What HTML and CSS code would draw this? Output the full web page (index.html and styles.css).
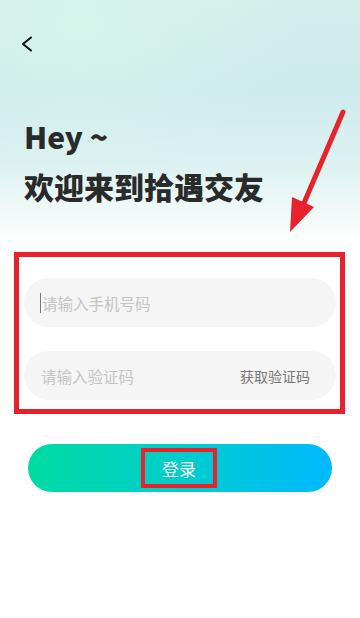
FILE: index.html
```html
<!DOCTYPE html>
<html lang="zh">
<head>
<meta charset="utf-8">
<title>登录</title>
<link rel="stylesheet" href="styles.css">
</head>
<body>
<div class="page">
  <div class="header">
    <svg class="back" width="14" height="16" viewBox="0 0 14 16"><path d="M11 1.5 L3 8 L11 14.5" fill="none" stroke="#111" stroke-width="2" stroke-linecap="round" stroke-linejoin="round"/></svg>
  </div>
  <h1 class="title"><span>Hey ~</span><span>欢迎来到拾遇交友</span></h1>
  <div class="frame">
    <div class="field">
      <span class="cursor"></span><span class="ph">请输入手机号码</span>
    </div>
    <div class="field field-code">
      <span class="ph">请输入验证码</span>
      <span class="get">获取验证码</span>
    </div>
  </div>
  <div class="btn"><span class="btn-label">登录</span></div>
  <svg class="arrow" width="360" height="240" viewBox="0 0 360 240">
    <line x1="343" y1="112" x2="304" y2="203" stroke="#e8212b" stroke-width="5" stroke-linecap="round"/>
    <polygon points="292,197 314,207 290,232" fill="#e8212b"/>
  </svg>
</div>
</body>
</html>
```
FILE: styles.css
```css
html, body { margin: 0; padding: 0; }
body { font-family: "Noto Sans CJK SC", "Noto Sans", sans-serif; background: #fff; }
.page {
  position: relative;
  width: 360px;
  height: 618px;
  overflow: hidden;
  background:
    radial-gradient(ellipse 220px 150px at 80px 30px, rgba(214,246,234,0.8), rgba(214,246,234,0) 100%),
    linear-gradient(180deg, #d3efeb 0px, #cdeaec 90px, #def2f2 170px, #f2faf9 215px, #ffffff 245px);
}
.header { padding: 36px 0 0 20px; height: 16px; }
.back { display: block; }
.title {
  margin: 59px 0 0 24px;
  font-size: 30px;
  line-height: 50px;
  font-weight: 900;
  color: #2a2a2a;
  display: flex;
  flex-direction: column;
}
.frame {
  margin: 41px 0 0 14px;
  width: 312px;
  border: 5px solid #e8212b;
  padding: 21px 4px 9px 5px;
  display: flex;
  flex-direction: column;
  gap: 24px;
  background: #fff;
}
.field {
  height: 49px;
  border-radius: 25px;
  background: #f5f5f5;
  display: flex;
  align-items: center;
  padding: 0 26px 0 16px;
}
.field-code { justify-content: space-between; padding-left: 17px; }
.cursor { width: 1px; height: 20px; background: #777; margin-right: 1px; }
.ph { font-size: 15.5px; color: #c4c4c4; }
.get { font-size: 14px; color: #777; }
.btn {
  margin: 30px 0 0 28px;
  width: 304px;
  height: 48px;
  border-radius: 24px;
  background: linear-gradient(90deg, #00dba2 0%, #00cfc8 45%, #00b9ff 100%);
  display: flex;
  justify-content: center;
  align-items: center;
}
.btn-label {
  width: 68px;
  height: 32px;
  border: 4px solid #e8212b;
  color: #fff;
  font-size: 17px;
  display: flex;
  justify-content: center;
  align-items: center;
  margin-left: -2px;
}
.arrow { position: absolute; left: 0; top: 0; }
```
